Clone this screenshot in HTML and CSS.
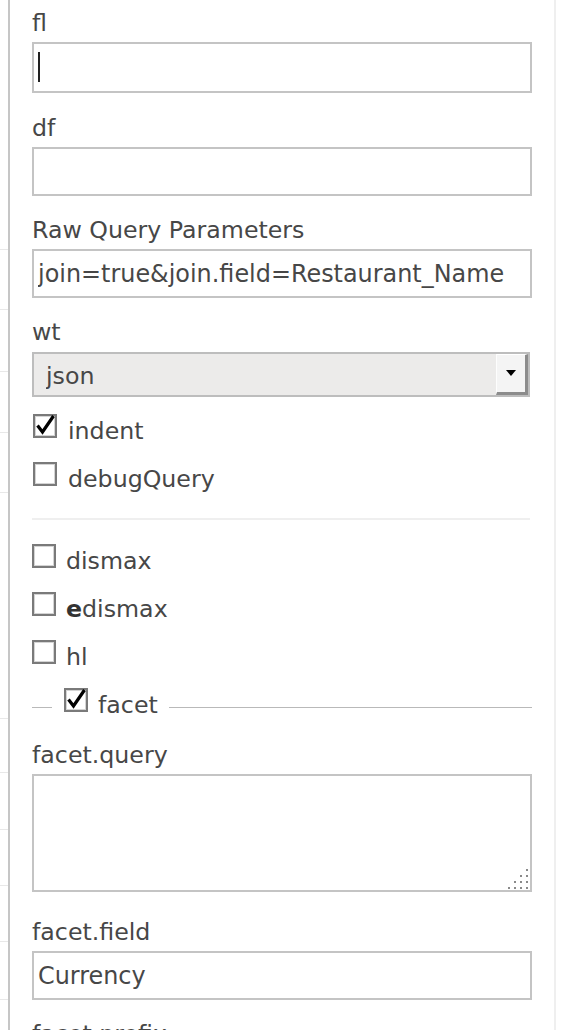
FILE: index.html
```html
<!DOCTYPE html>
<html lang="en">
<head>
<meta charset="utf-8">
<title>Query form</title>
<link rel="stylesheet" href="styles.css">
</head>
<body>
<div class="page">
  <div class="behind">
    <div></div><div></div><div></div><div></div><div></div><div></div>
    <div></div><div></div><div></div><div></div><div></div>
  </div>
  <div class="panel">
    <form class="form">
      <label class="field-label" for="fl">fl</label>
      <div class="input-wrap">
        <input class="text text-focus" id="fl" type="text" value="">
        <span class="caret"></span>
      </div>

      <label class="field-label" for="df">df</label>
      <input class="text" id="df" type="text" value="">

      <label class="field-label" for="raw">Raw Query Parameters</label>
      <input class="text" id="raw" type="text" value="join=true&amp;join.field=Restaurant_Name">

      <label class="field-label" for="wt">wt</label>
      <div class="select-wrap">
        <select class="select" id="wt">
          <option selected>json</option>
          <option>xml</option>
          <option>python</option>
        </select>
        <span class="select-btn"><span class="arrow"></span></span>
      </div>

      <div class="checks checks-common">
        <label class="check">
          <span class="cb"><svg viewBox="0 0 24 24" width="24" height="24"><path d="M4.5 11.5 L9.5 18 L20.5 2" fill="none" stroke="#000" stroke-width="3.2"/></svg></span>
          <span class="check-text">indent</span>
        </label>
        <label class="check">
          <span class="cb"></span>
          <span class="check-text">debugQuery</span>
        </label>
      </div>

      <div class="separator"></div>

      <div class="checks">
        <label class="check">
          <span class="cb"></span>
          <span class="check-text">dismax</span>
        </label>
        <label class="check">
          <span class="cb"></span>
          <span class="check-text"><b>e</b>dismax</span>
        </label>
        <label class="check">
          <span class="cb"></span>
          <span class="check-text">hl</span>
        </label>
      </div>

      <div class="legend">
        <span class="legend-line short"></span>
        <label class="check legend-check">
          <span class="cb"><svg viewBox="0 0 24 24" width="24" height="24"><path d="M4.5 11.5 L9.5 18 L20.5 2" fill="none" stroke="#000" stroke-width="3.2"/></svg></span>
          <span class="check-text">facet</span>
        </label>
        <span class="legend-line long"></span>
      </div>

      <label class="field-label" for="fq">facet.query</label>
      <div class="area-wrap">
        <textarea class="area" id="fq"></textarea>
        <svg class="grip" viewBox="0 0 20 20" width="20" height="20">
          <rect x="18" y="0" width="2" height="2"/>
          <rect x="12" y="6" width="2" height="2"/><rect x="18" y="6" width="2" height="2"/>
          <rect x="6" y="12" width="2" height="2"/><rect x="12" y="12" width="2" height="2"/><rect x="18" y="12" width="2" height="2"/>
          <rect x="0" y="18" width="2" height="2"/><rect x="6" y="18" width="2" height="2"/><rect x="12" y="18" width="2" height="2"/><rect x="18" y="18" width="2" height="2"/>
        </svg>
      </div>

      <label class="field-label" for="ff">facet.field</label>
      <input class="text" id="ff" type="text" value="Currency">

      <label class="field-label" for="fp">facet.prefix</label>
      <input class="text" id="fp" type="text" value="">
    </form>
  </div>
</div>
</body>
</html>
```
FILE: styles.css
```css
* {
  box-sizing: border-box;
}

html,
body {
  margin: 0;
  padding: 0;
  background: #fff;
}

body {
  font-family: "DejaVu Sans", Verdana, sans-serif;
  font-size: 23.7px;
  color: #474747;
}

.page {
  display: flex;
  height: 1030px;
  overflow: hidden;
}

.behind {
  width: 8px;
  flex: none;
  display: grid;
  grid-template-rows: 250px 60px 62px 61px 60px 226px 54px 57px 56px 56px 58px;
  align-content: start;
}

.behind > div {
  border-bottom: 1px solid #e8e8e8;
}

.panel {
  width: 548px;
  flex: none;
  border-left: 2px solid #c6c6c6;
  border-right: 2px solid #efefef;
  padding: 4px 22px 0;
}

.form {
  display: block;
  width: 500px;
}

.field-label {
  display: block;
  height: 38px;
  line-height: 38px;
  white-space: nowrap;
}

.input-wrap,
.area-wrap,
.select-wrap {
  position: relative;
}

.text {
  display: block;
  width: 500px;
  height: 49px;
  margin: 0 0 15px;
  padding: 0 3px 0 4px;
  border: 2px solid #c4c4c4;
  border-radius: 0;
  background: #fff;
  font-family: inherit;
  font-size: 23.9px;
  color: #474747;
  outline: none;
}

.text-focus {
  height: 51px;
  margin-bottom: 16px;
}

.caret {
  position: absolute;
  left: 6px;
  top: 10px;
  width: 2px;
  height: 30px;
  background: #222;
}

.select-wrap {
  width: 498px;
  height: 45px;
  margin-top: 1px;
}

.select {
  display: block;
  width: 498px;
  height: 45px;
  margin: 0;
  padding: 2px 40px 0 12px;
  border: 2px solid #bdbdbd;
  border-radius: 0;
  background: #ecebea;
  font: inherit;
  color: #474747;
  -webkit-appearance: none;
  appearance: none;
  outline: none;
}

.select-btn {
  position: absolute;
  top: 2px;
  right: 2px;
  bottom: 2px;
  width: 32px;
  display: flex;
  align-items: center;
  justify-content: center;
  background: #f4f4f4;
  border-top: 1px solid #fff;
  border-left: 1px solid #fdfdfd;
  border-right: 3px solid #8c8c8c;
  border-bottom: 3px solid #8c8c8c;
}

.arrow {
  width: 0;
  height: 0;
  border-left: 5px solid transparent;
  border-right: 5px solid transparent;
  border-top: 6px solid #000;
  margin-top: -2px;
}

.checks {
  display: flex;
  flex-direction: column;
}

.checks-common {
  margin-top: 10px;
}

.check {
  display: flex;
  align-items: flex-start;
  height: 48px;
}

.cb {
  flex: none;
  width: 24px;
  height: 24px;
  margin-top: 7px;
  margin-right: 10px;
  border: 2px solid #7a7a7a;
  box-shadow: inset 0 0 0 1px #d4d4d4;
  background: #fff;
  position: relative;
}

.checks-common .cb {
  margin-left: 1px;
  margin-right: 11px;
}

.cb svg {
  position: absolute;
  left: -2px;
  top: -2px;
}

.check-text {
  line-height: 48px;
  white-space: nowrap;
}

.check-text b {
  font-weight: bold;
  color: #333;
}

.separator {
  height: 2px;
  width: 498px;
  background: #efefef;
  margin: 15px 0 17px;
}

.legend {
  display: flex;
  align-items: flex-start;
  height: 48px;
  margin-bottom: 7px;
}

.legend-line {
  height: 1px;
  background: #b9b9b9;
  margin-top: 26px;
}

.legend-line.short {
  width: 20px;
  margin-right: 12px;
}

.legend-line.long {
  flex: 1;
  margin-left: 11px;
}

.legend-check {
  flex: none;
}

.area {
  display: block;
  width: 500px;
  height: 118px;
  margin: 0 0 21px;
  padding: 3px;
  border: 2px solid #c4c4c4;
  border-radius: 0;
  background: #fff;
  font: inherit;
  color: #474747;
  resize: none;
  outline: none;
}

.grip {
  position: absolute;
  right: 4px;
  bottom: 3px;
  fill: #8a8a8a;
}
```
